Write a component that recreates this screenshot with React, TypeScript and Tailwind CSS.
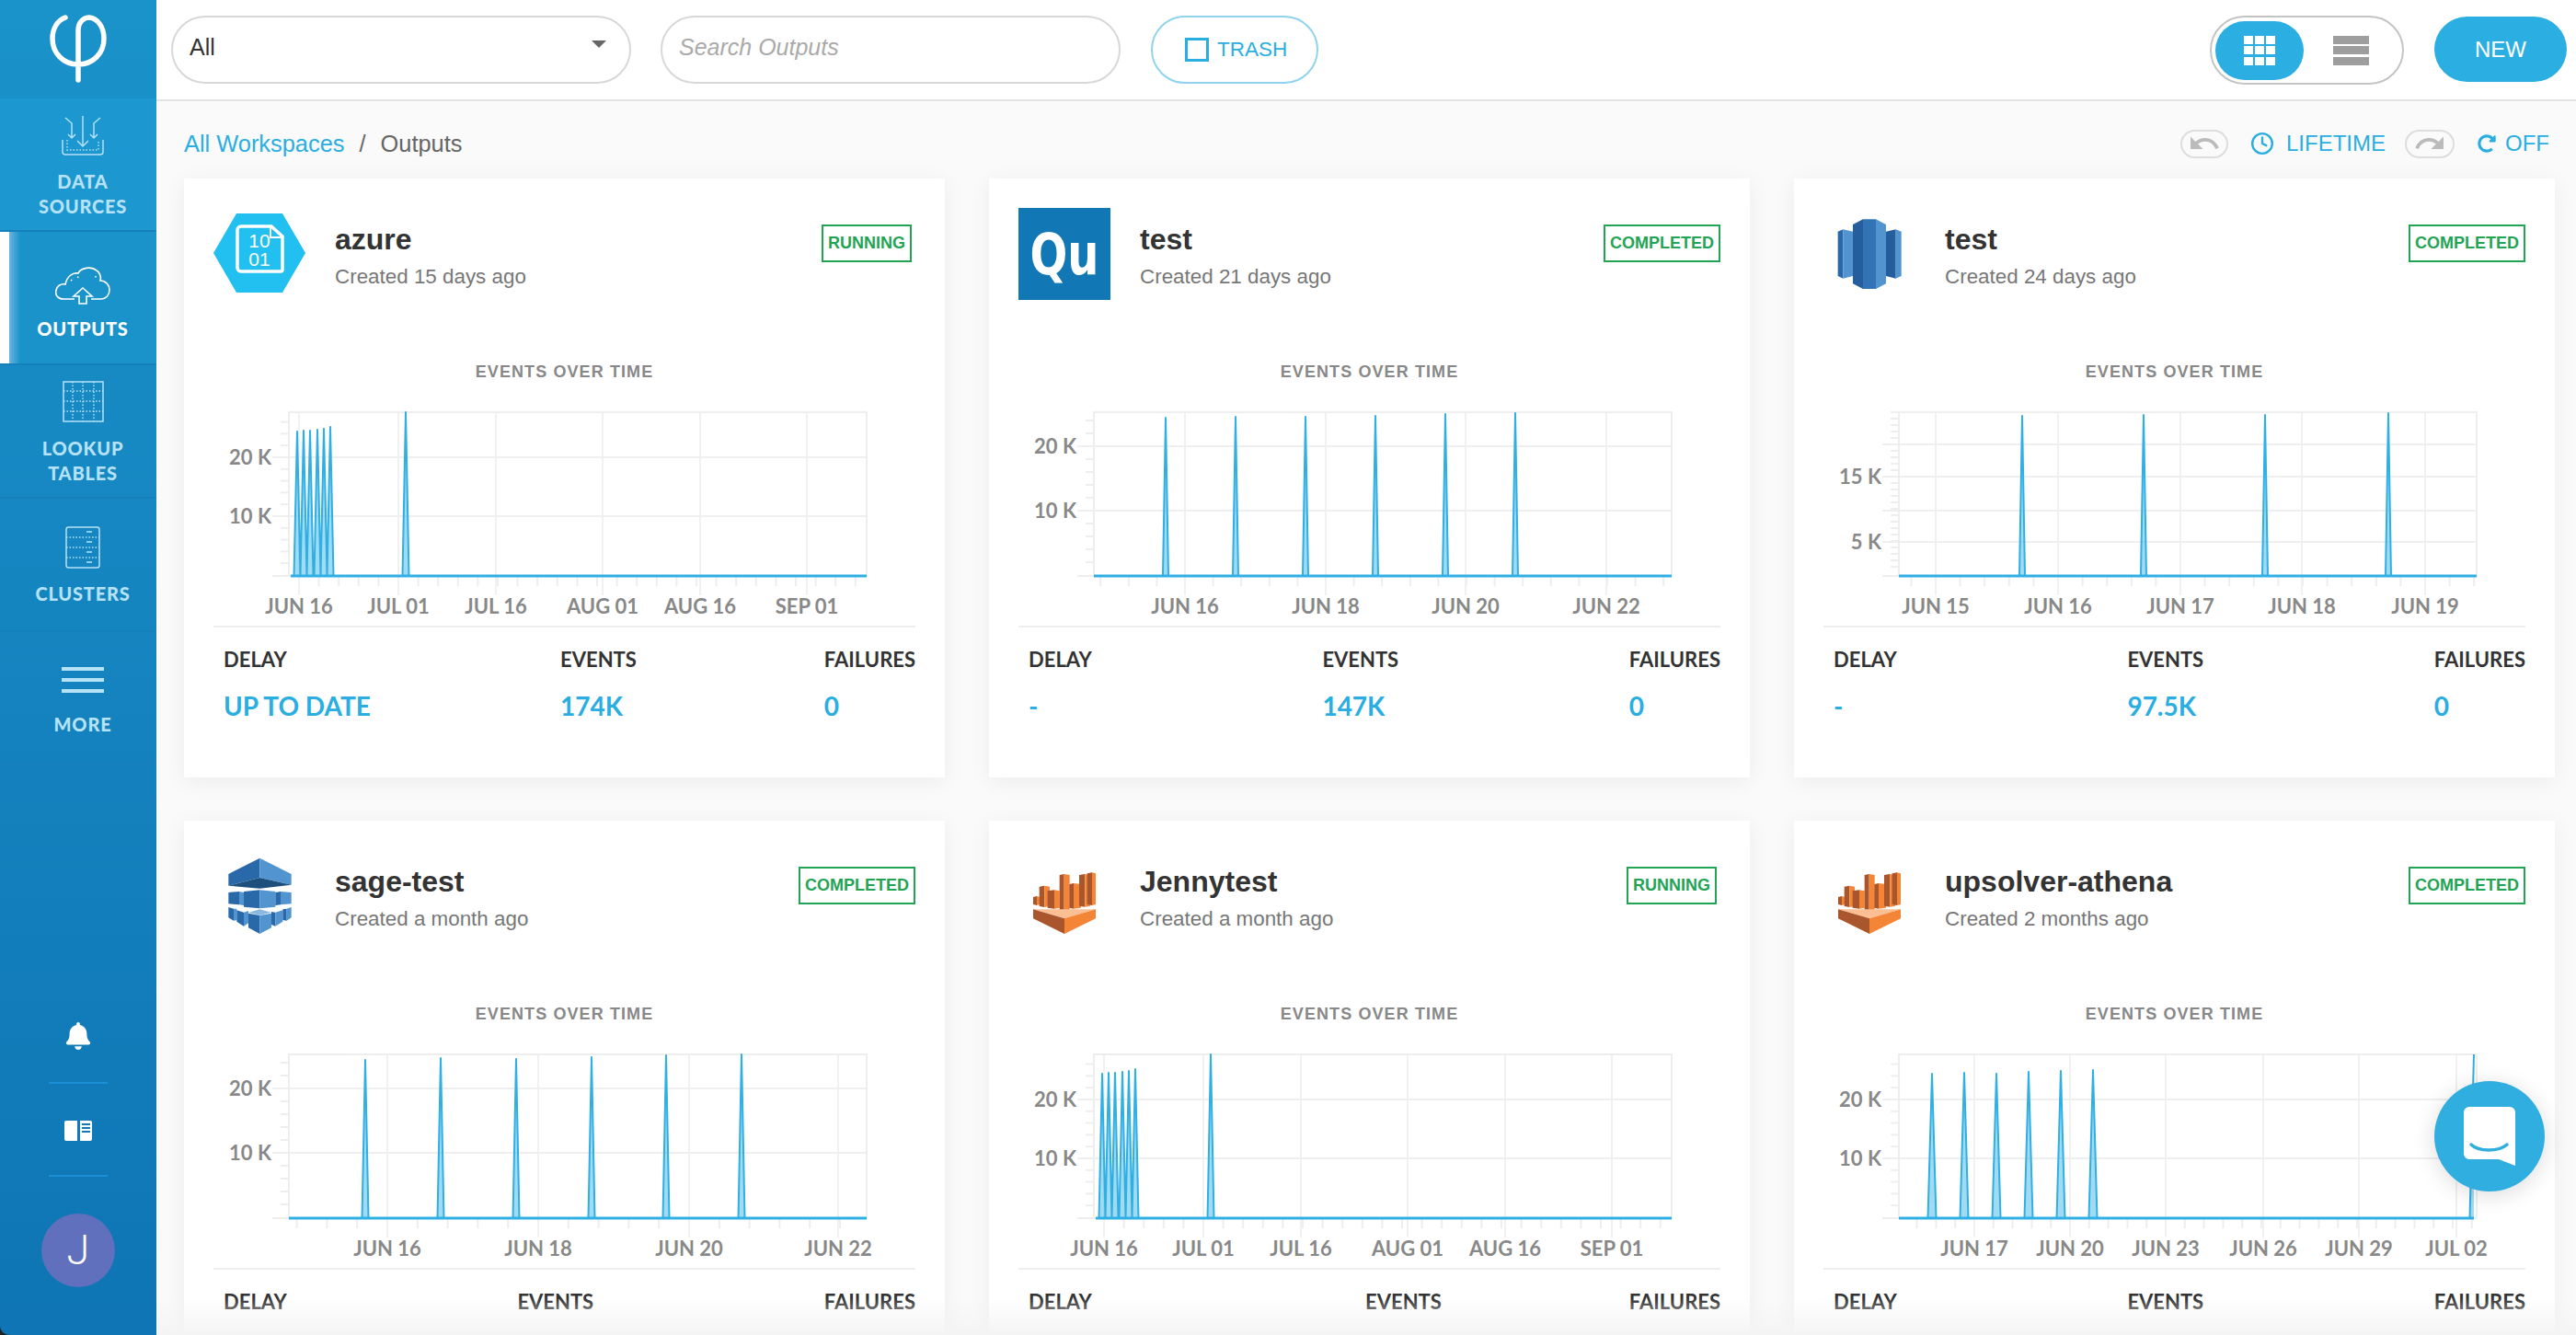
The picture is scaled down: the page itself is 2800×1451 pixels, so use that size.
import { Clock } from 'lucide-react';
import { FaBell, FaRedoAlt } from 'react-icons/fa';
import { MdRedo, MdUndo } from 'react-icons/md';

const PLOT_W = 628;
const PLOT_H = 178;

interface Spike {
  x: number;
  top: number;
  open?: boolean;
}

interface ChartProps {
  grid: { x: number; label: string }[];
  rows: { y: number; label?: string }[];
  yStep: number;
  spikes: Spike[];
  halfWidth: number;
  start?: number;
}

function Chart({ grid, rows, yStep, spikes, halfWidth, start = 0 }: ChartProps) {
  const step = (grid[1].x - grid[0].x) / 5;
  const minorX: number[] = [];
  for (let x = grid[0].x % step; x < PLOT_W; x += step) minorX.push(x);

  const minorY: number[] = [];
  for (let y = rows[0].y % yStep; y < PLOT_H - 4; y += yStep) minorY.push(y);

  let line = `M${start} ${PLOT_H}`;
  let area = line;
  let endX = PLOT_W;
  spikes.forEach((s) => {
    const seg = `L${s.x - halfWidth} ${PLOT_H} L${s.x} ${s.top}`;
    line += ' ' + seg;
    area += ' ' + seg;
    if (s.open) {
      endX = s.x;
    } else {
      const down = ` L${s.x + halfWidth} ${PLOT_H}`;
      line += down;
      area += down;
    }
  });
  if (endX === PLOT_W) line += ` L${PLOT_W} ${PLOT_H}`;

  return (
    <svg width="762" height="240" viewBox="0 0 762 240" className="block overflow-visible">
      <g transform="translate(82 13)">
        {minorY.map((y) => (
          <line key={y} x1={-9} x2={0} y1={y} y2={y} stroke="#eeeeee" strokeWidth="2" />
        ))}
        {minorX.map((x) => (
          <line key={x} x1={x} x2={x} y1={PLOT_H} y2={PLOT_H + 11} stroke="#eeeeee" strokeWidth="2" />
        ))}
        {grid.map((g) => (
          <g key={g.label}>
            <line x1={g.x} x2={g.x} y1={0} y2={PLOT_H + 21} stroke="#f1f1f1" strokeWidth="2" />
            <text
              x={g.x}
              y={PLOT_H + 41}
              textAnchor="middle"
              className="fill-[#888888] text-[22px] font-bold font-['Lato',sans-serif]"
            >
              {g.label}
            </text>
          </g>
        ))}
        {rows.map((r) => (
          <g key={r.y}>
            <line x1={-18} x2={PLOT_W} y1={r.y} y2={r.y} stroke="#efefef" strokeWidth="2" />
            {r.label && (
              <text
                x={-19}
                y={r.y + 8}
                textAnchor="end"
                className="fill-[#888888] text-[22px] font-bold font-['Lato',sans-serif]"
              >
                {r.label}
              </text>
            )}
          </g>
        ))}
        <line x1={-18} x2={0} y1={PLOT_H} y2={PLOT_H} stroke="#eeeeee" strokeWidth="2" />
        <rect x={0} y={0} width={PLOT_W} height={PLOT_H} fill="none" stroke="#eeeeee" strokeWidth="2" />
        <path d={area + ` L${endX} ${PLOT_H} Z`} fill="#2fafe3" fillOpacity="0.45" />
        <path d={line} fill="none" stroke="#2fafe3" strokeWidth="2" strokeLinejoin="round" />
        <line x1={start} x2={endX} y1={PLOT_H} y2={PLOT_H} stroke="#2fafe3" strokeWidth="3" />
      </g>
    </svg>
  );
}

function HexIcon() {
  return (
    <svg viewBox="0 0 100 100" className="w-[100px] h-[100px]">
      <polygon points="25,6 75,6 100,49 75,92 25,92 0,49" fill="#22c0f1" />
      <path d="M30 20 H63 L75 31 V67 a2 2 0 0 1 -2 2 H30 a4 4 0 0 1 -4 -4 V24 a4 4 0 0 1 4 -4 Z" fill="none" stroke="#ffffff" strokeWidth="3.5" />
      <path d="M62 20 V32 H75" fill="none" stroke="#ffffff" strokeWidth="2" />
      <text x="50" y="43" textAnchor="middle" fill="#ffffff" className="text-[21px] font-['Liberation_Sans',sans-serif]">10</text>
      <text x="50" y="63" textAnchor="middle" fill="#ffffff" className="text-[21px] font-['Liberation_Sans',sans-serif]">01</text>
    </svg>
  );
}

function QuIcon() {
  return (
    <div className="w-[100px] h-[100px] bg-[#1177b5] flex items-center justify-center">
      <span className="inline-block scale-y-[1.3] text-white text-[48px] leading-none font-bold font-['DejaVu_Sans',sans-serif]">Qu</span>
    </div>
  );
}

function RedshiftIcon() {
  return (
    <svg viewBox="36 18 300 300" className="w-[100px] h-[100px]">
      <polygon points="83,95 100,88 100,248 83,240" fill="#2a69a9" />
      <polygon points="100,88 132,95 132,240 100,248" fill="#5294cf" />
      <polygon points="132,72 165,55 165,282 132,265" fill="#245e9c" />
      <polygon points="165,55 207,55 207,282 165,282" fill="#3273b5" />
      <polygon points="207,55 240,72 240,265 207,282" fill="#5294cf" />
      <polygon points="240,95 272,88 272,248 240,240" fill="#245e9c" />
      <polygon points="272,88 290,95 290,240 272,248" fill="#5294cf" />
    </svg>
  );
}

function SageIcon() {
  const d = '#2a69a9';
  const l = '#5294cf';
  return (
    <svg viewBox="36 12 300 300" className="w-[100px] h-[100px]">
      <polygon points="85,90 187,38 187,102 85,128" fill={d} />
      <polygon points="187,38 290,90 290,125 187,102" fill={l} />
      <polygon points="85,128 187,102 290,125 187,137" fill="#1d4f7c" />
      <polygon points="85,150 120,147 120,190 85,187" fill={d} />
      <polygon points="120,147 135,150 135,192 120,190" fill={l} />
      <polygon points="135,147 187,142 187,202 135,197" fill={d} />
      <polygon points="187,142 238,147 238,197 187,202" fill={l} />
      <polygon points="238,150 255,147 255,190 238,192" fill={d} />
      <polygon points="255,147 290,150 290,187 255,190" fill={l} />
      <polygon points="85,198 102,203 102,242 85,232" fill={d} />
      <polygon points="102,203 112,203 112,240 102,242" fill={l} />
      <polygon points="112,208 135,215 135,260 112,245" fill={d} />
      <polygon points="135,215 150,210 150,250 135,260" fill={l} />
      <polygon points="225,213 238,215 238,260 225,255" fill={d} />
      <polygon points="238,215 262,208 262,245 238,260" fill={l} />
      <polygon points="262,205 275,203 275,242 262,240" fill={d} />
      <polygon points="275,203 290,198 290,232 275,242" fill={l} />
      <polygon points="150,215 187,205 225,215 187,224" fill="#8ab8e0" />
      <polygon points="150,218 187,225 187,285 150,265" fill={d} />
      <polygon points="187,225 225,218 225,265 187,285" fill={l} />
    </svg>
  );
}

function AthenaIcon() {
  const bars = [
    [96, 108, 118, 162, 192],
    [116, 133, 150, 128, 198],
    [143, 165, 182, 142, 203],
    [182, 197, 215, 90, 210],
    [214, 228, 252, 120, 203],
    [246, 265, 282, 90, 197],
    [272, 288, 300, 85, 192],
  ];
  return (
    <svg viewBox="48 12 300 300" className="w-[100px] h-[100px]">
      {bars.map(([a, b, c, top, bottom]) => (
        <g key={a}>
          <polygon points={`${a},${top + 3} ${b},${top} ${b},${bottom} ${a},${bottom - 3}`} fill="#a9562c" />
          <polygon points={`${b},${top} ${c},${top + 3} ${c},${bottom - 3} ${b},${bottom}`} fill="#f58536" />
        </g>
      ))}
      <polygon points="96,205 300,205 198,235" fill="#fbbf93" />
      <polygon points="96,205 198,235 198,285 96,235" fill="#a9562c" />
      <polygon points="198,235 300,205 300,235 198,285" fill="#f58536" />
    </svg>
  );
}

const clusterChart: ChartProps = {
  grid: [
    { x: 11, label: 'JUN 16' },
    { x: 119, label: 'JUL 01' },
    { x: 225, label: 'JUL 16' },
    { x: 341, label: 'AUG 01' },
    { x: 447, label: 'AUG 16' },
    { x: 563, label: 'SEP 01' },
  ],
  rows: [
    { y: 49, label: '20 K' },
    { y: 113, label: '10 K' },
  ],
  yStep: 12.8,
  halfWidth: 3.5,
  start: 2,
  spikes: [
    { x: 9, top: 21 },
    { x: 16, top: 20 },
    { x: 23, top: 20 },
    { x: 31, top: 19 },
    { x: 38, top: 18 },
    { x: 45, top: 16 },
    { x: 127, top: 0 },
  ],
};

const rows2010 = [
  { y: 37, label: '20 K' },
  { y: 107, label: '10 K' },
];

const cards = [
  {
    icon: <HexIcon />,
    name: 'azure',
    created: 'Created 15 days ago',
    status: 'RUNNING',
    chart: clusterChart,
    delay: 'UP TO DATE',
    events: '174K',
    failures: '0',
    wide: true,
  },
  {
    icon: <QuIcon />,
    name: 'test',
    created: 'Created 21 days ago',
    status: 'COMPLETED',
    chart: {
      grid: [
        { x: 99, label: 'JUN 16' },
        { x: 252, label: 'JUN 18' },
        { x: 404, label: 'JUN 20' },
        { x: 557, label: 'JUN 22' },
      ],
      rows: rows2010,
      yStep: 14,
      halfWidth: 3,
      spikes: [
        { x: 78, top: 6 },
        { x: 154, top: 5 },
        { x: 230, top: 5 },
        { x: 306, top: 4 },
        { x: 382, top: 2 },
        { x: 458, top: 1 },
      ],
    },
    delay: '-',
    events: '147K',
    failures: '0',
  },
  {
    icon: <RedshiftIcon />,
    name: 'test',
    created: 'Created 24 days ago',
    status: 'COMPLETED',
    chart: {
      grid: [
        { x: 40, label: 'JUN 15' },
        { x: 173, label: 'JUN 16' },
        { x: 306, label: 'JUN 17' },
        { x: 438, label: 'JUN 18' },
        { x: 572, label: 'JUN 19' },
      ],
      rows: [
        { y: 35 },
        { y: 70, label: '15 K' },
        { y: 107 },
        { y: 141, label: '5 K' },
      ],
      yStep: 7,
      halfWidth: 3,
      spikes: [
        { x: 134, top: 4 },
        { x: 266, top: 3 },
        { x: 398, top: 3 },
        { x: 532, top: 1 },
      ],
    },
    delay: '-',
    events: '97.5K',
    failures: '0',
  },
  {
    icon: <SageIcon />,
    name: 'sage-test',
    created: 'Created a month ago',
    status: 'COMPLETED',
    chart: {
      grid: [
        { x: 107, label: 'JUN 16' },
        { x: 271, label: 'JUN 18' },
        { x: 435, label: 'JUN 20' },
        { x: 597, label: 'JUN 22' },
      ],
      rows: rows2010,
      yStep: 14,
      halfWidth: 3.5,
      spikes: [
        { x: 83, top: 6 },
        { x: 165, top: 4 },
        { x: 247, top: 5 },
        { x: 329, top: 3 },
        { x: 410, top: 1 },
        { x: 492, top: 0 },
      ],
    },
  },
  {
    icon: <AthenaIcon />,
    name: 'Jennytest',
    created: 'Created a month ago',
    status: 'RUNNING',
    chart: clusterChart,
    wide: true,
  },
  {
    icon: <AthenaIcon />,
    name: 'upsolver-athena',
    created: 'Created 2 months ago',
    status: 'COMPLETED',
    chart: {
      grid: [
        { x: 82, label: 'JUN 17' },
        { x: 186, label: 'JUN 20' },
        { x: 290, label: 'JUN 23' },
        { x: 396, label: 'JUN 26' },
        { x: 500, label: 'JUN 29' },
        { x: 606, label: 'JUL 02' },
      ],
      rows: [
        { y: 49, label: '20 K' },
        { y: 113, label: '10 K' },
      ],
      yStep: 12.8,
      halfWidth: 4.5,
      spikes: [
        { x: 36, top: 21 },
        { x: 71, top: 20 },
        { x: 106, top: 21 },
        { x: 141, top: 19 },
        { x: 176, top: 18 },
        { x: 211, top: 17 },
        { x: 625, top: 0, open: true },
      ],
    },
  },
];

interface CardData {
  icon: React.ReactNode;
  name: string;
  created: string;
  status: string;
  chart: ChartProps;
  delay?: string;
  events?: string;
  failures?: string;
  wide?: boolean;
}

function Stat({ title, value }: { title: string; value?: string }) {
  return (
    <>
      <div className="h-[24px] text-[22px] leading-[24px] font-bold text-[#333333]">{title}</div>
      {value && <div className="mt-[21px] h-[34px] text-[28px] leading-[34px] font-bold text-[#2aaee2]">{value}</div>}
    </>
  );
}

function OutputCard({ card }: { card: CardData }) {
  const running = card.status === 'RUNNING';
  return (
    <div className="h-[651px] bg-white px-[32px] pt-[32px] shadow-[0_4px_22px_rgba(0,0,0,0.06)]">
      <div className="flex h-[100px]">
        <div className="w-[100px] h-[100px] shrink-0">{card.icon}</div>
        <div className="ml-[32px] flex-1 pt-[15px]">
          <div className="h-[38px] text-[32px] leading-[38px] font-bold text-[#333333]">{card.name}</div>
          <div className="mt-[8px] h-[28px] text-[22.4px] leading-[28px] text-[#777777]">{card.created}</div>
        </div>
        <div
          className={`mt-[18px] h-[41px] border-2 border-[#22a455] px-[5px] text-[18px] leading-[37px] font-bold text-[#22a455] ${
            running ? 'mr-[4px]' : ''
          }`}
        >
          {card.status}
        </div>
      </div>
      <div className="mt-[66px] h-[24px] text-center text-[18px] leading-[24px] tracking-[1.1px] font-bold text-[#888888]">
        EVENTS OVER TIME
      </div>
      <div className="mt-[19px]">
        <Chart {...card.chart} />
      </div>
      <div className="mt-[5px] border-t-2 border-[#eeeeee] pt-[23px] flex justify-between font-['Lato',sans-serif]">
        <div className={`pl-[11px] ${card.wide ? 'w-[173px]' : ''}`}>
          <Stat title="DELAY" value={card.delay} />
        </div>
        <div>
          <Stat title="EVENTS" value={card.events} />
        </div>
        <div>
          <Stat title="FAILURES" value={card.failures} />
        </div>
      </div>
    </div>
  );
}

function DataSourcesIcon() {
  return (
    <svg width="46" height="43" viewBox="0 0 46 43" fill="none" stroke="#b5e2f7" strokeWidth="1.5">
      <path d="M1 26 V39 a3 3 0 0 0 3 3 H42 a3 3 0 0 0 3 -3 V26" />
      <path d="M6 26 V37 H40 V26" strokeDasharray="1.5 2" />
      <path d="M23 0 V33 M17 27 L23 33 L29 27" />
      <path d="M4 2 L11 8 V24 M7 20 L11 24 L15 20" />
      <path d="M42 2 L35 8 V24 M31 20 L35 24 L39 20" />
    </svg>
  );
}

function CloudIcon() {
  return (
    <svg width="60" height="42" viewBox="0 0 60 42" fill="none" stroke="#ffffff" strokeWidth="1.6">
      <path d="M21 36 H9 C3 36 0 32 0.8 27 C1.5 22 6 19 11 20 C13 11 19 7 25 8 C28 2 39 0 45 5 C49 8 50 12 49 16 C55 16 59 21 59 26 C59 32 55 36 50 36 H39" />
      <path d="M30 24 L20 33 H26 V41 H34 V33 H40 Z" />
      <path d="M17 16 L20 14 M24 12 L27 13 M44 11 V14" strokeDasharray="1.5 2" />
    </svg>
  );
}

function TableIcon() {
  return (
    <svg width="45" height="45" viewBox="0 0 45 45" fill="none" stroke="#b5e2f7" strokeWidth="1.5">
      <rect x="1" y="1" width="43" height="43" />
      <path d="M1 11 H44 M1 22 H44 M1 33 H44 M11 1 V44 M22 1 V44 M34 1 V44" strokeDasharray="1.5 2" />
    </svg>
  );
}

function ClusterIcon() {
  return (
    <svg width="38" height="46" viewBox="0 0 38 46" fill="none" stroke="#b5e2f7" strokeWidth="1.5">
      <rect x="1" y="1" width="36" height="44" rx="2.5" />
      <path d="M1 12 H37 M1 23 H37 M1 34 H37" strokeDasharray="1.5 2" />
      <path d="M23 6 H29 M23 17 H29 M23 28 H29 M23 39 H29" />
    </svg>
  );
}

function MoreIcon() {
  return (
    <div className="w-[46px] flex flex-col gap-[8px]">
      <div className="h-[4px] bg-[#b5e2f7]" />
      <div className="h-[4px] bg-[#b5e2f7]" />
      <div className="h-[4px] bg-[#b5e2f7]" />
    </div>
  );
}

const navItems = [
  { label: ['DATA', 'SOURCES'], icon: <DataSourcesIcon />, top: 'pt-[19px]', gap: 'mt-[15px]', bg: 'bg-[#1d97cf]' },
  { label: ['OUTPUTS'], icon: <CloudIcon />, top: 'pt-[37px]', gap: 'mt-[13px]', active: true, bg: 'bg-[#1a92ca]' },
  { label: ['LOOKUP', 'TABLES'], icon: <TableIcon />, top: 'pt-[17px]', gap: 'mt-[15px]', bg: '' },
  { label: ['CLUSTERS'], icon: <ClusterIcon />, top: 'pt-[30px]', gap: 'mt-[14px]', bg: '' },
  { label: ['MORE'], icon: <MoreIcon />, top: 'pt-[38px]', gap: 'mt-[21px]', bg: '' },
];

function Sidebar() {
  return (
    <aside className="w-[170px] shrink-0 h-full flex flex-col rounded-bl-[10px] bg-linear-to-b from-[#1a92ca] to-[#0f75b4]">
      <div className="h-[107px] flex items-start justify-center pt-[15px]">
        <svg width="62" height="76" viewBox="0 0 62 76" fill="none" stroke="#ffffff" strokeWidth="5.5" strokeLinecap="round">
          <path d="M31 72 V18 C31 8 38 4 43 4 C52 5 59 14 59 27 C59 43 47 55 31 55 C15 55 3 43 3 27 C3 15 9 7 17 4" />
        </svg>
      </div>
      {navItems.map((item) => (
        <div
          key={item.label[0]}
          className={`relative h-[145px] pl-[10px] border-b-2 border-[#1580bb] flex flex-col items-center ${item.top} ${item.bg}`}
        >
          {item.active && (
            <>
              <div className="absolute left-0 top-0 bottom-0 w-[10px] bg-white" />
              <div className="absolute left-[10px] top-0 bottom-0 w-[12px] bg-linear-to-r from-[#6ab6dc] to-transparent" />
            </>
          )}
          {item.icon}
          <div
            className={`${item.gap} text-center text-[20px] leading-[27px] font-black tracking-[0.8px] font-['Lato',sans-serif] ${
              item.active ? 'text-white' : 'text-[#b5e2f7]'
            }`}
          >
            {item.label.map((line) => (
              <div key={line}>{line}</div>
            ))}
          </div>
        </div>
      ))}
      <div className="mt-auto flex flex-col items-center pb-[52px]">
        <FaBell className="text-white" size={30} />
        <div className="mt-[35px] w-[64px] h-[2px] bg-[#1b8fd6]" />
        <div className="mt-[40px] flex gap-[3px]">
          <div className="w-[14px] h-[22px] rounded-l-[2px] bg-white" />
          <div className="w-[13px] h-[22px] rounded-r-[2px] bg-white flex flex-col gap-[2px] py-[3px] px-[2px]">
            <div className="h-[2px] bg-[#1179ba]" />
            <div className="h-[2px] bg-[#1179ba]" />
            <div className="h-[2px] bg-[#1179ba]" />
          </div>
        </div>
        <div className="mt-[37px] w-[64px] h-[2px] bg-[#1b8fd6]" />
        <div className="mt-[40px] w-[80px] h-[80px] rounded-full bg-[#6170bd] flex items-center justify-center text-white text-[45px] font-['Roboto',sans-serif] font-light">
          J
        </div>
      </div>
    </aside>
  );
}

function TopBar() {
  return (
    <div className="h-[110px] shrink-0 bg-white border-b-2 border-[#e4e4e4] flex items-start pt-[17px] pl-[16px]">
      <div className="relative w-[500px] h-[74px] rounded-full border-2 border-[#d8d8d8] pl-[18px] text-[25px] leading-[64px] text-[#333333]">
        All
        <div className="absolute right-[25px] top-[25px] w-0 h-0 border-x-[8px] border-x-transparent border-t-[8px] border-t-[#666666]" />
      </div>
      <div className="ml-[32px] w-[500px] h-[74px] rounded-full border-2 border-[#d8d8d8] pl-[18px] text-[25px] leading-[64px] italic text-[#aaaaaa]">
        Search Outputs
      </div>
      <div className="ml-[33px] w-[182px] h-[74px] rounded-full border-2 border-[#8fd3ee] flex items-center pl-[35px] gap-[9px] text-[22.5px] text-[#2aaee2]">
        <div className="w-[26px] h-[26px] border-[3px] border-[#2aaee2]" />
        TRASH
      </div>
      <div className="ml-auto w-[211px] h-[75px] rounded-full border-2 border-[#c4c4c4] flex items-center pl-[4px]">
        <div className="w-[96px] h-[64px] rounded-full bg-[#2baee2] flex items-center justify-center">
          <div className="grid grid-cols-3 gap-[2.5px]">
            {Array.from({ length: 9 }).map((_, i) => (
              <div key={i} className="w-[9.5px] h-[9px] bg-white" />
            ))}
          </div>
        </div>
        <div className="ml-[32px] w-[39px] flex flex-col gap-[2.5px]">
          <div className="h-[9px] bg-[#9e9e9e]" />
          <div className="h-[9px] bg-[#9e9e9e]" />
          <div className="h-[9px] bg-[#9e9e9e]" />
        </div>
      </div>
      <div className="ml-[33px] mr-[10px] mt-[1px] w-[144px] h-[71px] rounded-full bg-[#2baee2] text-white text-[24px] flex items-center justify-center">
        NEW
      </div>
    </div>
  );
}

function Breadcrumbs() {
  return (
    <div className="h-[84px] shrink-0 flex items-center pl-[30px] pr-[29px] pt-[8px] text-[25.4px]">
      <span className="text-[#2aaee2]">All Workspaces</span>
      <span className="ml-[16px] text-[#666666]">/</span>
      <span className="ml-[16px] text-[#666666]">Outputs</span>
      <div className="ml-auto flex items-center text-[24px] text-[#2aaee2]">
        <div className="w-[52px] h-[31px] rounded-full border-2 border-[#dddddd] flex items-center justify-center">
          <MdUndo className="text-[#bbbbbb]" size={36} />
        </div>
        <Clock className="ml-[24px]" size={26} strokeWidth={2.2} />
        <span className="ml-[13px]">LIFETIME</span>
        <div className="ml-[21px] w-[54px] h-[31px] rounded-full border-2 border-[#dddddd] flex items-center justify-center">
          <MdRedo className="text-[#bbbbbb]" size={36} />
        </div>
        <FaRedoAlt className="ml-[25px]" size={20} />
        <span className="ml-[10px]">OFF</span>
      </div>
    </div>
  );
}

export default function App() {
  return (
    <div className="relative w-[2800px] h-[1451px] overflow-hidden flex bg-[#222222] font-['Liberation_Sans',sans-serif]">
      <Sidebar />
      <main className="relative flex-1 h-full flex flex-col bg-[#fafafa]">
        <TopBar />
        <Breadcrumbs />
        <div className="grid grid-cols-3 gap-x-[48px] gap-y-[47px] pl-[30px] pr-[23px]">
          {(cards as CardData[]).map((card, i) => (
            <OutputCard key={i} card={card} />
          ))}
        </div>
        <div className="absolute left-0 right-0 bottom-0 h-[40px] bg-linear-to-b from-transparent to-[#f4f4f4]" />
      </main>
      <div className="absolute left-[2646px] top-[1175px] w-[120px] h-[120px] rounded-full bg-[#31aee0] shadow-[0_4px_24px_rgba(0,0,0,0.14)] flex items-center justify-center">
        <svg width="56" height="64" viewBox="0 0 56 64">
          <path d="M6 0 H50 a6 6 0 0 1 6 6 V64 L38 57 H6 a6 6 0 0 1 -6 -6 V6 a6 6 0 0 1 6 -6 Z" fill="#ffffff" />
          <path d="M8 41 C16 49 38 49 47 41" fill="none" stroke="#31aee0" strokeWidth="3.5" strokeLinecap="round" />
        </svg>
      </div>
    </div>
  );
}
